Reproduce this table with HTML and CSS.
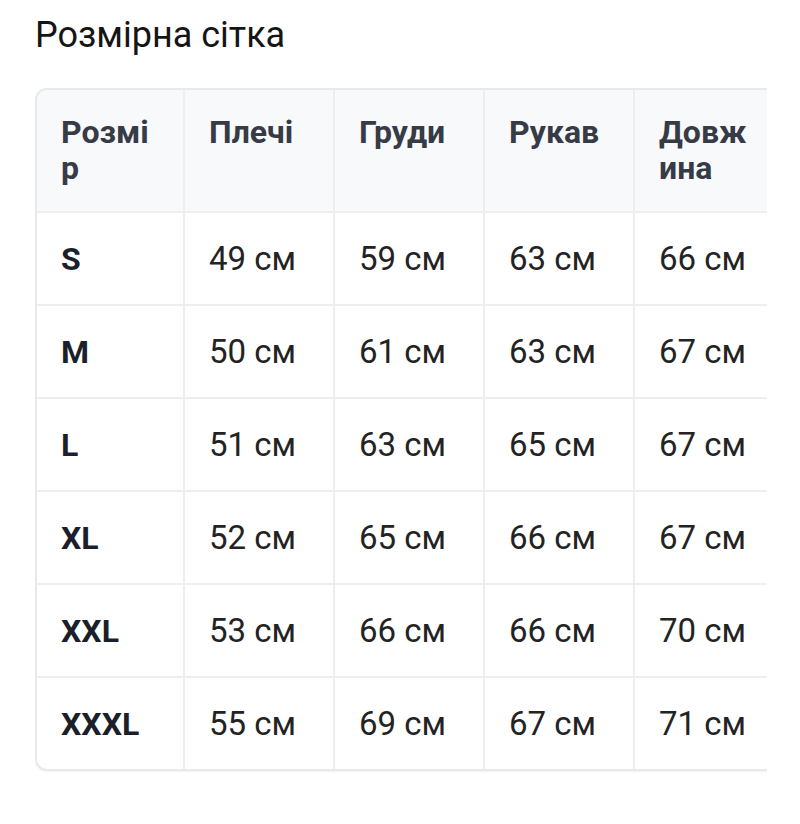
FILE: index.html
```html
<!DOCTYPE html>
<html lang="uk">
<head>
<meta charset="utf-8">
<title>Розмірна сітка</title>
<link rel="stylesheet" href="styles.css">
</head>
<body>
<h1 class="title">Розмірна сітка</h1>
<div class="scroller">
  <div class="table-wrap">
    <table class="sizes">
      <thead>
        <tr><th>Розмір</th><th>Плечі</th><th>Груди</th><th>Рукав</th><th>Довжина</th></tr>
      </thead>
      <tbody>
        <tr><td class="size">S</td><td>49 см</td><td>59 см</td><td>63 см</td><td>66 см</td></tr>
        <tr><td class="size">M</td><td>50 см</td><td>61 см</td><td>63 см</td><td>67 см</td></tr>
        <tr><td class="size">L</td><td>51 см</td><td>63 см</td><td>65 см</td><td>67 см</td></tr>
        <tr><td class="size">XL</td><td>52 см</td><td>65 см</td><td>66 см</td><td>67 см</td></tr>
        <tr><td class="size">XXL</td><td>53 см</td><td>66 см</td><td>66 см</td><td>70 см</td></tr>
        <tr><td class="size">XXXL</td><td>55 см</td><td>69 см</td><td>67 см</td><td>71 см</td></tr>
      </tbody>
    </table>
  </div>
</div>
</body>
</html>
```

FILE: styles.css
```css
* { box-sizing: border-box; }

body {
  margin: 0;
  padding: 15px 33px 0 35px;
  background: #ffffff;
  font-family: Roboto, "Noto Sans", "Liberation Sans", sans-serif;
  color: #222222;
}

.title {
  margin: 0 0 33px 0;
  font-size: 36px;
  font-weight: 400;
  line-height: 40px;
  color: #151515;
}

.scroller {
  width: 732px;
  overflow-x: auto;
  overflow-y: hidden;
  scrollbar-width: none;
  padding-bottom: 4px;
}

.table-wrap {
  display: inline-block;
  border: 2px solid #e8e9eb;
  border-radius: 12px;
  overflow: hidden;
  box-shadow: 0 1px 2px rgba(0, 0, 0, 0.06);
}

.sizes {
  border-collapse: separate;
  border-spacing: 0;
  table-layout: fixed;
  width: 748px;
  font-size: 33px;
}

.sizes th,
.sizes td {
  width: 150px;
  text-align: left;
  border-right: 2px solid #eeeef0;
  border-bottom: 2px solid #eeeef0;
}

.sizes th:first-child,
.sizes td:first-child { width: 148px; }

.sizes th:last-child,
.sizes td:last-child { border-right: none; }

.sizes tbody tr:last-child td { border-bottom: none; }

.sizes th {
  background: #f8f9fb;
  color: #363b45;
  font-weight: 700;
  font-size: 32px;
  line-height: 36px;
  padding: 24px 24px 25px 24px;
  vertical-align: top;
  word-break: break-all;
}

.sizes td {
  padding: 24px 24px 23px 24px;
  line-height: 44px;
  font-weight: 400;
  color: #232323;
  white-space: nowrap;
}

.sizes td.size {
  font-weight: 700;
  font-size: 32px;
  color: #1b1f2a;
}
```
